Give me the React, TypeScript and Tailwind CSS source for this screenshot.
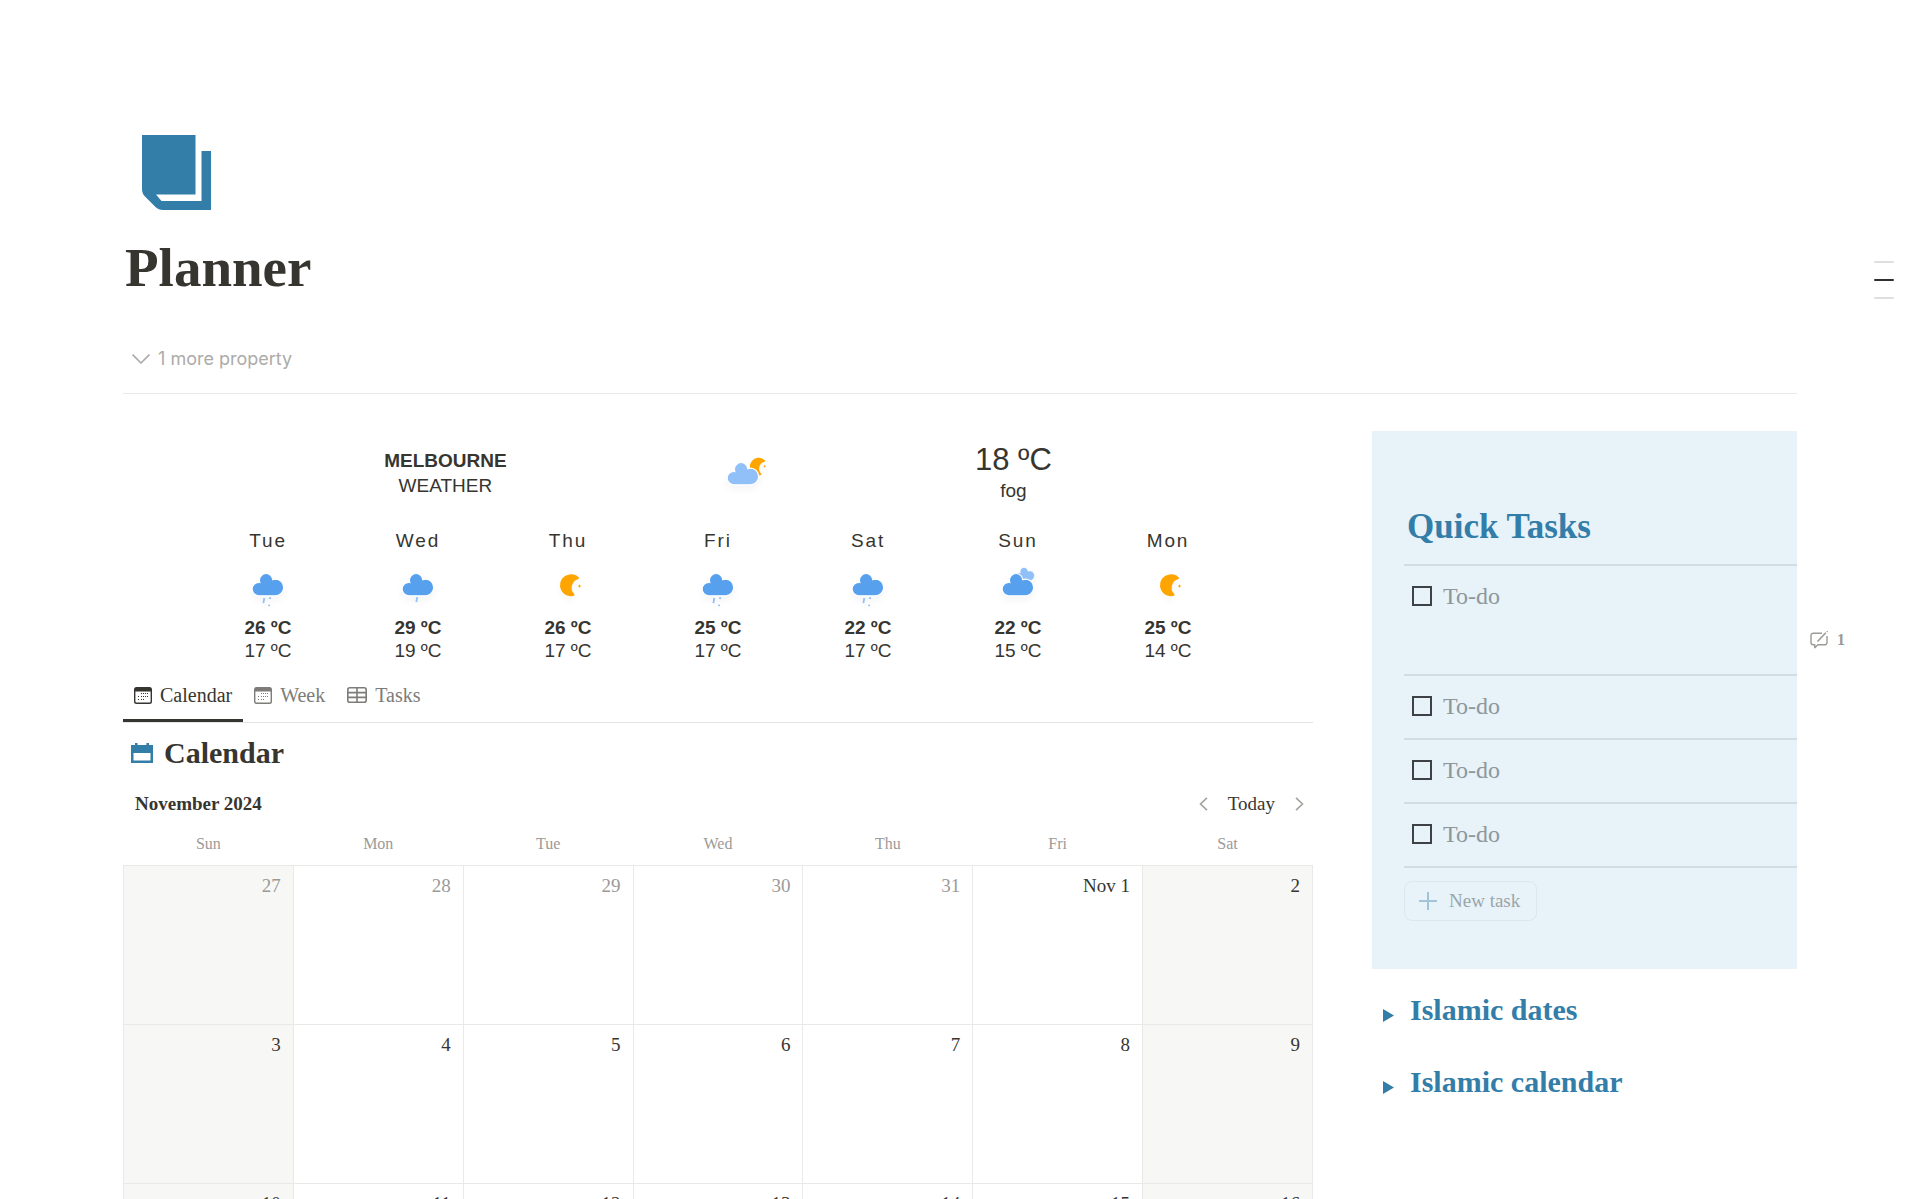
import { ReactNode } from 'react';

const CLOUD =
  'M47.7,35.4c0-4.6-3.7-8.2-8.2-8.2c-1,0-1.9,0.2-2.8,0.5c-0.3-3.4-3.1-6.2-6.6-6.2c-3.7,0-6.7,3-6.7,6.7c0,0.8,0.2,1.6,0.4,2.3c-0.3-0.1-0.7-0.1-1-0.1c-3.7,0-6.7,3-6.7,6.7c0,3.6,2.9,6.6,6.5,6.7l17.2,0C44.2,43.3,47.7,39.8,47.7,35.4z';

const MOON =
  'M14.5,13.2c0-3.7,2-6.9,5-8.7c-1.5-0.9-3.2-1.3-5-1.3c-5.5,0-10,4.5-10,10s4.5,10,10,10c1.8,0,3.5-0.5,5-1.3C16.5,20.2,14.5,16.9,14.5,13.2z';

type WeatherKind = 'showers' | 'drizzle' | 'clear' | 'cloudy' | 'cloudyNight';

const forecast: { day: string; kind: WeatherKind; high: number; low: number }[] = [
  { day: 'Tue', kind: 'showers', high: 26, low: 17 },
  { day: 'Wed', kind: 'drizzle', high: 29, low: 19 },
  { day: 'Thu', kind: 'clear', high: 26, low: 17 },
  { day: 'Fri', kind: 'showers', high: 25, low: 17 },
  { day: 'Sat', kind: 'showers', high: 22, low: 17 },
  { day: 'Sun', kind: 'cloudy', high: 22, low: 15 },
  { day: 'Mon', kind: 'clear', high: 25, low: 14 },
];

const weekdays = ['Sun', 'Mon', 'Tue', 'Wed', 'Thu', 'Fri', 'Sat'];

const weeks = [
  ['27', '28', '29', '30', '31', 'Nov 1', '2'],
  ['3', '4', '5', '6', '7', '8', '9'],
  ['10', '11', '12', '13', '14', '15', '16'],
];

function WeatherIcon({ kind }: { kind: WeatherKind }) {
  return (
    <svg viewBox="0 0 64 64" className="size-16 shrink-0 drop-shadow-[0_4px_3px_rgba(0,0,0,0.04)]" aria-hidden="true">
      {kind === 'clear' && (
        <g fill="#ffa500">
          <path d={MOON} stroke="#ffa500" strokeWidth="2" strokeLinejoin="round" transform="translate(20.5 20) rotate(15 14.5 13.2)" />
          <path d="M43.5 32.2l.6 1.3 1.3.6-1.3.6-.6 1.3-.6-1.3-1.3-.6 1.3-.6z" />
        </g>
      )}
      {kind === 'cloudyNight' && (
        <>
          <g fill="#ffa500">
            <path d={MOON} stroke="#ffa500" strokeWidth="2" strokeLinejoin="round" transform="translate(36 15) scale(.8) rotate(15 14.5 13.2)" />
            <path d="M53.6 23.8l.5 1 1 .5-1 .5-.5 1-.5-1-1-.5 1-.5z" />
          </g>
          <path d={CLOUD} fill="#91c0f8" stroke="#fff" strokeWidth="1.2" />
        </>
      )}
      {kind === 'cloudy' && (
        <>
          <path d={CLOUD} fill="#91c0f8" stroke="#fff" strokeWidth="1.2" transform="translate(20 2.5) scale(.6)" />
          <path d={CLOUD} fill="#57a0ee" stroke="#fff" strokeWidth="1.2" />
        </>
      )}
      {kind === 'drizzle' && (
        <>
          <path d="M31.2 45.2l-.9 4.8" stroke="#91c0f8" strokeWidth="1.8" />
          <path d={CLOUD} fill="#57a0ee" stroke="#fff" strokeWidth="1.2" />
        </>
      )}
      {kind === 'showers' && (
        <>
          <path d="M28.3 46l-.9 5.2M34.2 45.2l-.3 1.8M33.2 52.6l-.2 1.6" stroke="#91c0f8" strokeWidth="1.8" />
          <path d={CLOUD} fill="#57a0ee" stroke="#fff" strokeWidth="1.2" />
        </>
      )}
    </svg>
  );
}

function BookIcon() {
  return (
    <svg viewBox="0 0 69 75" className="w-[69px] h-[75px]" fill="#337ea9" aria-hidden="true">
      <path d="M0 0h53.5v59.5H14l5.5 6.5h40V16H69v59H21c-3 0-5.5-1-7.5-3L3 61.5C1 59.5 0 57 0 54.5z" />
    </svg>
  );
}

function MonthIcon() {
  return (
    <svg viewBox="0 0 18 17" className="w-[18px] h-[17px]" fill="currentColor" aria-hidden="true">
      <path fillRule="evenodd" d="M2.5 0h13A2.5 2.5 0 0 1 18 2.5v12a2.5 2.5 0 0 1-2.5 2.5h-13A2.5 2.5 0 0 1 0 14.5v-12A2.5 2.5 0 0 1 2.5 0zM1.4 4.6v9.7c0 .8.5 1.3 1.3 1.3h12.6c.8 0 1.3-.5 1.3-1.3V4.600z" />
      <path d="M7 6h1v1H7zM9 6h1v1H9zM11 6h1v1h-1zM13 6h1v1h-1zM4 9h1v1H4zM7 9h1v1H7zM9 9h1v1H9zM11 9h1v1h-1zM13 9h1v1h-1zM4 12h1v1H4zM7 12h1v1H7zM9 12h1v1H9z" />
    </svg>
  );
}

function TableIcon() {
  return (
    <svg viewBox="0 0 20 16" className="w-5 h-4" fill="none" stroke="currentColor" strokeWidth="1.6" aria-hidden="true">
      <rect x=".8" y=".8" width="18.4" height="14.4" rx="2" />
      <path d="M1 5.6h18M1 10.4h18M10 1v14" />
    </svg>
  );
}

function Tab({ icon, label, active }: { icon: ReactNode; label: string; active?: boolean }) {
  return (
    <button
      type="button"
      role="tab"
      aria-selected={!!active}
      className={
        active
          ? 'flex items-center gap-2 h-[51px] px-[11px] border-b-3 border-[#373530] text-[#373530]'
          : 'flex items-center gap-2 h-[51px] px-[11px] pb-[3px] text-[#7d7c78]'
      }
    >
      {icon}
      <span>{label}</span>
    </button>
  );
}

function Weather() {
  return (
    <section className="pt-[10px] pb-[9px] px-[70px] text-[19px] leading-[23px] text-center font-['Liberation_Sans',sans-serif]">
      <div className="flex items-center justify-evenly">
        <div className="leading-[25px]">
          <p className="font-bold">MELBOURNE</p>
          <p>WEATHER</p>
        </div>
        <div className="pl-[13px] pr-[9px]">
          <WeatherIcon kind="cloudyNight" />
        </div>
        <div>
          <p className="text-[31px] leading-9">18 ºC</p>
          <p className="leading-[26px]">fog</p>
        </div>
      </div>
      <ul className="grid grid-cols-7 mt-[25px]">
        {forecast.map((f) => (
          <li key={f.day} className="flex flex-col items-center">
            <span className="tracking-widest leading-[22px]">{f.day}</span>
            <WeatherIcon kind={f.kind} />
            <span className="font-bold">{f.high} ºC</span>
            <span>{f.low} ºC</span>
          </li>
        ))}
      </ul>
    </section>
  );
}

function Calendar() {
  return (
    <section>
      <div role="tablist" className="flex h-[52px] border-b border-[#e4e4e2] text-xl">
        <Tab icon={<MonthIcon />} label="Calendar" active />
        <Tab icon={<MonthIcon />} label="Week" />
        <Tab icon={<TableIcon />} label="Tasks" />
      </div>
      <h2 className="flex items-center gap-[11px] pt-3 pl-2 text-[30px] leading-9 font-bold">
        <svg viewBox="0 0 22 20" className="w-[22px] h-5" aria-hidden="true">
          <path fill="#337ea9" fillRule="evenodd" d="M4 0h2.5v2h9V0H18v2h4v18H0V2h4zM2.5 10v7.5h17V10z" />
        </svg>
        Calendar
      </h2>
      <div className="flex items-center justify-between h-8 mt-[17px] pl-3 pr-[9px]">
        <h3 className="font-bold">November 2024</h3>
        <div className="flex items-center gap-5">
          <button type="button" aria-label="Previous month" className="text-[#a3a29f]">
            <svg viewBox="0 0 9 14" className="w-[9px] h-[14px]" fill="none" stroke="currentColor" strokeWidth="1.6">
              <path d="M8 .8L1.5 7 8 13.2" />
            </svg>
          </button>
          <button type="button">Today</button>
          <button type="button" aria-label="Next month" className="text-[#a3a29f]">
            <svg viewBox="0 0 9 14" className="w-[9px] h-[14px]" fill="none" stroke="currentColor" strokeWidth="1.6">
              <path d="M1 .8L7.5 7 1 13.2" />
            </svg>
          </button>
        </div>
      </div>
      <table className="w-full table-fixed border-collapse mt-1">
        <thead>
          <tr className="h-[41px]">
            {weekdays.map((d) => (
              <th key={d} className="p-0 text-base font-normal text-[#9b9a97]">
                {d}
              </th>
            ))}
          </tr>
        </thead>
        <tbody>
          {weeks.map((week, w) => (
            <tr key={w} className="h-[159px]">
              {week.map((d, i) => (
                <td
                  key={d}
                  className={`border border-[#e9e9e7] pt-[6px] pr-3 align-top text-right ${i % 6 === 0 ? 'bg-[#f7f7f5]' : ''} ${w === 0 && i < 5 ? 'text-[#9b9a97]' : ''}`}
                >
                  {d}
                </td>
              ))}
            </tr>
          ))}
        </tbody>
      </table>
    </section>
  );
}

function Comments() {
  return (
    <button type="button" className="absolute left-full top-16 ml-[13px] flex items-center gap-[9px] text-[#9b9a97]">
      <svg viewBox="0 0 18 18" className="size-[18px]" fill="none" stroke="currentColor" strokeWidth="1.4" strokeLinejoin="round">
        <path d="M12 2.2H3.2A2.2 2.2 0 0 0 1 4.4v7.2a2.2 2.2 0 0 0 2.2 2.2h1.6v3l3.2-3h6.8a2.2 2.2 0 0 0 2.2-2.2V5" />
        <path d="M7.5 10.5L15.8 1.8" strokeWidth="1.6" />
        <path d="M16.8 1l.8-.8" />
      </svg>
      <span className="text-base leading-5 font-bold">1</span>
    </button>
  );
}

function QuickTasks() {
  return (
    <section className="bg-[#e7f3f8] pt-[70px] pb-12 pl-8">
      <h2 className="pl-[3px] pb-[11px] text-[35px] leading-[52px] font-bold text-[#337ea9]">Quick Tasks</h2>
      <ul className="text-2xl text-[#8d979b]">
        {[1, 2, 3, 4].map((n) => (
          <li key={n} className={`relative border-t-2 border-[#d2dde1] pt-[15px] pl-2 ${n === 1 ? 'h-[110px]' : 'h-16'}`}>
            <label className="flex items-center gap-[11px] leading-[30px]">
              <input type="checkbox" className="appearance-none size-5 border-2 border-[#3f4244]" />
              To-do
            </label>
            {n === 1 && <Comments />}
          </li>
        ))}
      </ul>
      <div className="border-t-2 border-[#d2dde1] pt-[13px]">
        <button type="button" className="flex items-center gap-3 h-10 pl-[14px] pr-4 rounded-lg border border-[#dbe7ec] text-[#9aa5a9]">
          <svg viewBox="0 0 18 18" className="size-[18px]" stroke="#a3c4d6" strokeWidth="2" aria-hidden="true">
            <path d="M0 9h18M9 0v18" />
          </svg>
          New task
        </button>
      </div>
    </section>
  );
}

function Toggle({ title }: { title: string }) {
  return (
    <button type="button" aria-expanded="false" className="flex items-center gap-4 h-[72px] pl-[11px] text-[30px] font-bold text-[#337ea9]">
      <svg viewBox="0 0 11 13" className="w-[11px] h-[13px] mt-3" fill="currentColor" aria-hidden="true">
        <path d="M0 0l11 6.5L0 13z" />
      </svg>
      {title}
    </button>
  );
}

export default function App() {
  return (
    <div className="relative h-screen overflow-hidden bg-white px-[123px] pt-[135px] text-[19px] text-[#373530] font-['Liberation_Serif',serif]">
      <header className="border-b border-[#e9e9e7] pb-5">
        <div className="pl-[19px]">
          <BookIcon />
        </div>
        <h1 className="mt-6 pl-[2px] text-[55px] leading-[68px] font-bold">Planner</h1>
        <button type="button" className="flex items-center gap-2 mt-[43px] pl-[9px] text-lg font-['Inter',sans-serif] text-[#acaba9]">
          <svg viewBox="0 0 18 10" className="w-[18px] h-[10px]" fill="none" stroke="currentColor" strokeWidth="1.6" aria-hidden="true">
            <path d="M.6 .6L9 9 17.4 .6" />
          </svg>
          1 more property
        </button>
      </header>
      <main className="grid grid-cols-[2.8fr_1fr] gap-[59px] mt-[37px]">
        <div>
          <Weather />
          <Calendar />
        </div>
        <div>
          <QuickTasks />
          <div className="mt-1 flex flex-col items-start">
            <Toggle title="Islamic dates" />
            <Toggle title="Islamic calendar" />
          </div>
        </div>
      </main>
      <nav aria-label="Outline" className="absolute right-[26px] top-[261px] flex flex-col gap-4">
        <a href="#top" aria-label="Planner" className="w-5 h-0.5 rounded-full bg-[#dfdfde]" />
        <a href="#tasks" aria-label="Quick Tasks" className="w-5 h-0.5 rounded-full bg-[#32302c]" />
        <a href="#dates" aria-label="Islamic dates" className="w-5 h-0.5 rounded-full bg-[#dfdfde]" />
      </nav>
    </div>
  );
}
